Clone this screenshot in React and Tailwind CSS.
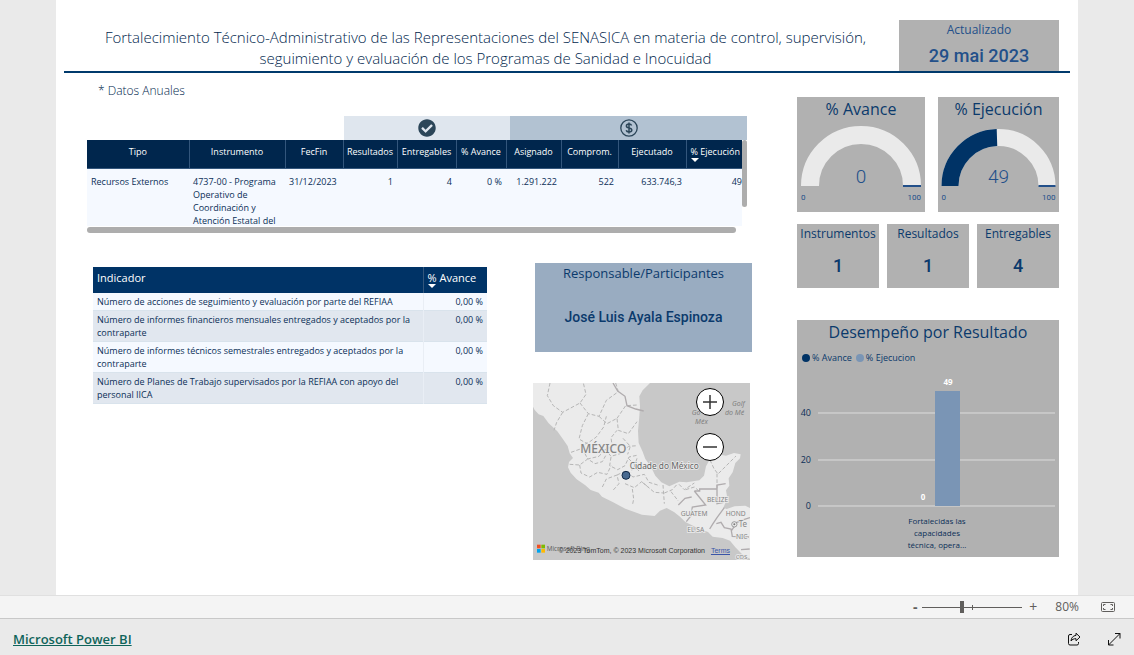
import React from "react";
import { FaCheckCircle } from "react-icons/fa";

const programColumns = [
  { name: "Tipo", width: "w-[102px]", value: "Recursos Externos", align: "text-left" },
  { name: "Instrumento", width: "w-[96px]", value: "4737-00 - Programa Operativo de Coordinación y Atención Estatal del", align: "text-left" },
  { name: "FecFin", width: "w-[58px]", value: "31/12/2023", align: "text-left" },
  { name: "Resultados", width: "w-[54px]", value: "1", align: "text-right" },
  { name: "Entregables", width: "w-[59px]", value: "4", align: "text-right" },
  { name: "% Avance", width: "w-[50px]", value: "0 %", align: "text-right" },
  { name: "Asignado", width: "w-[55px]", value: "1.291.222", align: "text-right" },
  { name: "Comprom.", width: "w-[57px]", value: "522", align: "text-right" },
  { name: "Ejecutado", width: "w-[68px]", value: "633.746,3", align: "text-right" },
  { name: "% Ejecución", width: "w-[56px]", value: "49", align: "text-right", sorted: true },
];

const indicators = [
  "Número de acciones de seguimiento y evaluación por parte del REFIAA",
  "Número de informes financieros mensuales entregados y aceptados por la contraparte",
  "Número de informes técnicos semestrales entregados y aceptados por la contraparte",
  "Número de Planes de Trabajo supervisados por la REFIAA con apoyo del personal IICA",
];

const SortArrow = () => (
  <svg viewBox="0 0 8 4" className="absolute left-1 top-full h-1 w-2" aria-hidden="true">
    <path d="M0 0h8L4 4z" fill="#fff" />
  </svg>
);

const Header = () => (
  <header className="flex items-start border-b-2 border-[#003a6c] pr-[11px]">
    <h1 className="flex-1 pl-2 pt-[27px] text-center text-[15px] leading-[21px] font-light text-[#00264d]">
      Fortalecimiento Técnico-Administrativo de las Representaciones del SENASICA en materia de control, supervisión,
      <br />
      seguimiento y evaluación de los Programas de Sanidad e Inocuidad
    </h1>
    <div className="mt-5 flex h-[51px] w-40 shrink-0 flex-col items-center bg-[#b1b1b1] text-[#23508a]">
      <p className="text-xs leading-5">Actualizado</p>
      <p className="pt-0.5 font-['Roboto'] text-lg leading-7 font-medium">29 mai 2023</p>
    </div>
  </header>
);

const ProgramTable = () => (
  <section className="mr-[5px]">
    <div className="flex h-6 pl-[257px]">
      <div className="flex flex-[166] items-center justify-center bg-[#dfe6ee]">
        <FaCheckCircle className="h-[18px] w-[18px] text-[#2b4558]" />
      </div>
      <div className="flex flex-[236] items-center justify-center bg-[#b2c2d2]">
        <svg viewBox="0 0 18 18" className="h-[18px] w-[18px]" fill="none" stroke="#2b4558">
          <circle cx="9" cy="9" r="8.2" strokeWidth="1.3" />
          <path d="M11.6 6.6C11.2 5.5 10.2 5 9 5c-1.500 0-2.600.700-2.600 1.900 0 2.700 5.400 1.300 5.400 4.100C11.800 12.300 10.600 13 9 13c-1.400 0-2.500-.600-2.800-1.700M9 3.500v11" strokeWidth="1.5" />
        </svg>
      </div>
    </div>
    <div className="flex">
      <div className="h-[86px] flex-1 overflow-hidden bg-[#f5f9ff]">
        <table className="w-full table-fixed border-collapse text-[9px] leading-[13px]">
          <thead>
            <tr className="h-7 border-b border-[#33567c] bg-[#00264d] text-white">
              {programColumns.map((col) => (
                <th
                  key={col.name}
                  scope="col"
                  className={`${col.width} border-r border-[#33567c] p-0 pt-[5px] align-top font-normal whitespace-nowrap last:border-r-0`}
                >
                  <span className={col.sorted ? "relative block pl-1 text-left" : "block"}>
                    {col.name}
                    {col.sorted && <SortArrow />}
                  </span>
                </th>
              ))}
            </tr>
          </thead>
          <tbody>
            <tr className="text-[#0b2f57]">
              {programColumns.map((col) => (
                <td key={col.name} className={`px-1 pt-1.5 align-top last:pr-0 ${col.align}`}>
                  {col.value}
                </td>
              ))}
            </tr>
          </tbody>
        </table>
      </div>
      <div className="h-[67px] w-[5px] rounded-full bg-[#adadad]" />
    </div>
    <div className="mt-px mr-[11px] h-1.5 rounded-full bg-[#adadad]" />
  </section>
);

const IndicatorTable = () => (
  <table className="w-full table-fixed border-collapse text-[9px] leading-[13px] text-[#0b2f57]">
    <thead>
      <tr className="h-[26px] bg-[#003366] text-left text-[11px] text-white">
        <th scope="col" className="border-r border-[#33567c] px-1 pt-1 align-top font-normal">
          Indicador
        </th>
        <th scope="col" className="w-16 p-0 pt-1 align-top font-normal whitespace-nowrap">
          <span className="relative block pl-1">
            % Avance
            <SortArrow />
          </span>
        </th>
      </tr>
    </thead>
    <tbody>
      {indicators.map((name) => (
        <tr key={name} className="border-b border-[#d9e3ec] odd:bg-[#f5f9ff] even:bg-[#e1e7ef]">
          <td className="border-r border-[#e9eef5] px-1 py-0.5">{name}</td>
          <td className="px-1 py-0.5 text-right align-top">0,00 %</td>
        </tr>
      ))}
    </tbody>
  </table>
);

const stateBorders =
  "M75 24l-8 38 18 30 28 20 52-28 18-26-8-34M113 112l-18 30-8 24M165 84l25 32 32 8 22-48 36-26-8-26M190 116l-18 36-10 40 24 14 28-20 22-30 8-32M222 124l24 22 30-16 4 36 30 10 26-36M276 130l26-38 34-2M138 232l34-12 14-18M172 220l16 32 34-8 18-22 22-6-4-28 18-22M240 222l18 22 34-10 18-20 28-2M134 268l30 2 24-18 22 14 22-6 10-18M164 270l4 24 26 12 24-14 28 6 12-26M258 246l-4 26 24 12 22-12 12-26 28-6M232 336l12-24 32-12 6 26-18 20M276 300l26-12 22 18 34-8 14 24 32 10M300 326l28 12 22-18 22 18M322 342l4 30-4 20M352 322l36 30 28 2M414 330l4 56M418 354l24-10 16-18M438 350l22 28M462 328l16 16 30-20M482 344l26-8 14 12M310 250l18 18-10 24M294 190l22 24-8 24M336 250l-8 24 18 18";

const MexicoMap = () => (
  <section className="relative mr-0.5 overflow-hidden bg-[#c8c8c8]">
    <svg viewBox="24 24 651 531" className="block w-full font-['Noto_Sans']" role="img" aria-label="México">
      <path
        d="M24 24v71l5 10 12 13 14 5 16 22 26 24 16 22 15 22 6 22 10 14-12 12-3 16 8 16 18 20 26 18 16 14 24 8 10 12 32 16 38 20 50 18 38 4 16-16 20-8 22 12 18 14 16 16 20 10 20 10 28 10 14 14 30 4 22 8 16 20 22 22 28 16V402l-20-10-32 2-24 8-10-4 12-28-4-24 10-14-2-22 12-18 8-28 14-14 2-12-20-4-24 8-26-4-22 14-12 22-6 28-14 14-38 6-22-2-30 14-24-12-18-20-14-28-16-22-8-22-12-26-2-36 4-44 2-30-2-30 10-18 24-24z"
        fill="#ebebeb"
      />
      <path d={stateBorders} fill="none" stroke="#b6b6b6" strokeWidth="3" strokeDasharray="11 6" />
      <path d="M555 255l12 26 12 16 54-54M576 296v44" fill="none" stroke="#b6b6b6" strokeWidth="3" strokeDasharray="11 6" />
      <path
        d="M264 24l14 24 22 16 6 28 26 10 24 6M460 390l20-20 20-4M508 348l34 42-40 6-4 26-14 18M508 348h16v-6h52v-12l26-4M576 344v42l20-4M598 398l-22 30-12 18-10 16M574 446l14-4 10 16 20 4 4 22M620 466l16-24 20-8 19-6M620 484l52 2M648 524l26-2"
        fill="none"
        stroke="#b0acae"
        strokeWidth="4"
      />
      <g fill="#858585" stroke="#ebebeb" strokeWidth="5" paintOrder="stroke" fontSize="20">
        <text x="166" y="234" fontSize="36" fontWeight="500">MÉXICO</text>
        <text x="314" y="281" fontSize="25" fill="#666">Cidade do México</text>
        <text x="546" y="381">BELIZE</text>
        <text x="467" y="423">GUATEM</text>
        <text x="602" y="423">HOND</text>
        <text x="487" y="471">EL SA</text>
        <text x="641" y="457" fontSize="24">Te</text>
        <text x="633" y="491">NIC</text>
        <text x="632" y="551" fontSize="18">COS</text>
      </g>
      <g fill="#808080" fontSize="21" fontStyle="italic">
        <text x="621" y="92">Golf</text>
        <text x="500" y="119">Go</text>
        <text x="600" y="119">do Mé</text>
        <text x="510" y="146">Méx</text>
      </g>
      <circle cx="628" cy="448" r="8" fill="#ebebeb" stroke="#777" strokeWidth="2" />
      <circle cx="628" cy="448" r="3" fill="#777" />
      <circle cx="303" cy="301" r="12" fill="#48698f" stroke="#142b49" strokeWidth="3" />
      <path d="M36 509h11v11H36z" fill="#f25022" />
      <path d="M49 509h11v11H49z" fill="#7fba00" />
      <path d="M36 522h11v11H36z" fill="#00a4ef" />
      <path d="M49 522h11v11H49z" fill="#ffb900" />
      <text x="65" y="528" fontSize="19" fill="#666">Microsoft Bing</text>
    </svg>
    <div className="absolute top-[5px] right-[26px] flex flex-col gap-[17px]">
      <button type="button" aria-label="Acercar" className="flex h-7 w-7 items-center justify-center rounded-full border border-black bg-white">
        <svg viewBox="0 0 16 16" className="h-4 w-4" stroke="#333" strokeWidth="1.5">
          <path d="M1 8h14M8 1v14" />
        </svg>
      </button>
      <button type="button" aria-label="Alejar" className="flex h-7 w-7 items-center justify-center rounded-full border border-black bg-white">
        <svg viewBox="0 0 16 16" className="h-4 w-4" stroke="#333" strokeWidth="1.5">
          <path d="M1 8h14" />
        </svg>
      </button>
    </div>
    <p className="absolute right-5 bottom-1 font-['Liberation_Sans'] text-[7px] leading-[10px] whitespace-nowrap text-[#333]">
      © 2023 TomTom, © 2023 Microsoft Corporation{" "}
      <a href="#terms" className="ml-1 text-[#3a55a8] underline">
        Terms
      </a>
    </p>
  </section>
);

const Gauge = ({ title, value, radius, thickness, width }) => {
  const cx = width / 2;
  const cy = 65;
  const r = radius - thickness / 2;
  const angle = Math.PI * (1 - value / 100);
  const x = cx + r * Math.cos(angle);
  const y = cy - r * Math.sin(angle);
  return (
    <section className="h-[115px] bg-[#b1b1b1]" style={{ flex: width }}>
      <h2 className="text-center text-base leading-6 text-[#0b3a6c]">{title}</h2>
      <svg viewBox={`0 0 ${width} 88`} className="block w-full font-['Roboto']" role="img" aria-label={`${title}: ${value}`}>
        <path d={`M${cx - r} ${cy}A${r} ${r} 0 0 1 ${cx + r} ${cy}`} fill="none" stroke="#eaeaea" strokeWidth={thickness} />
        {value > 0 && (
          <path d={`M${cx - r} ${cy}A${r} ${r} 0 0 1 ${x} ${y}`} fill="none" stroke="#003366" strokeWidth={thickness} />
        )}
        <path d={`M${cx + radius - thickness} ${cy}h${thickness}`} stroke="#23508a" strokeWidth="2" />
        <text x={cx} y="62" textAnchor="middle" fontSize="19" fontWeight="300" fill="#23508a">
          {value}
        </text>
        <text x={cx - radius} y="79" fontSize="8" fill="#23508a">0</text>
        <text x={cx + radius} y="79" textAnchor="end" fontSize="8" fill="#23508a">100</text>
      </svg>
    </section>
  );
};

const CountCard = ({ title, value }) => (
  <section className="h-16 flex-1 bg-[#b1b1b1] text-center text-[#0b3a6c]">
    <h2 className="text-xs leading-5 whitespace-nowrap">{title}</h2>
    <p className="pt-2 font-['Roboto'] text-lg leading-7 font-medium">{value}</p>
  </section>
);

const ResultChart = () => (
  <section className="h-[237px] bg-[#b1b1b1] text-[#0b3a6c]">
    <h2 className="text-center text-base leading-6">Desempeño por Resultado</h2>
    <ul className="flex gap-1 pt-2 pl-[5px] text-[9px] leading-3">
      <li className="flex items-center gap-0.5">
        <span className="h-2 w-2 rounded-full bg-[#003366]" />% Avance
      </li>
      <li className="flex items-center gap-0.5">
        <span className="h-2 w-2 rounded-full bg-[#7a95b5]" />% Ejecucion
      </li>
    </ul>
    <svg viewBox="0 0 262 193" className="block w-full" fontSize="9" fill="#0b2f57" role="img" aria-label="Desempeño por Resultado">
      <path d="M21 49h237M21 96h237M21 142h237" stroke="#dcdcdc" />
      <path d="M138 27h25v115h-25z" fill="#7a95b5" />
      <g textAnchor="end">
        <text x="14" y="52">40</text>
        <text x="14" y="99">20</text>
        <text x="14" y="145">0</text>
      </g>
      <g textAnchor="middle" fill="#fff" fontSize="8" fontWeight="700">
        <text x="151" y="21">49</text>
        <text x="126" y="136">0</text>
      </g>
      <g textAnchor="middle" fontSize="8">
        <text x="140" y="160">Fortalecidas las</text>
        <text x="140" y="172">capacidades</text>
        <text x="140" y="184">técnica, opera...</text>
      </g>
    </svg>
  </section>
);

const StatusBar = () => (
  <div className="flex h-6 items-center justify-end border-y border-t-[#e0e0e0] border-b-[#c8c8c8] bg-[#f4f4f4] pr-[19px] text-[#605e5c]">
    <button type="button" aria-label="Reducir" className="w-3 text-center text-sm leading-5 font-bold">
      -
    </button>
    <div className="relative mx-px flex items-center">
      <input
        type="range"
        min="0"
        max="100"
        defaultValue="39"
        aria-label="Zoom"
        className="h-px w-[100px] appearance-none bg-[#605e5c] [&::-webkit-slider-thumb]:h-3 [&::-webkit-slider-thumb]:w-1 [&::-webkit-slider-thumb]:appearance-none [&::-webkit-slider-thumb]:bg-[#605e5c]"
      />
      <span className="pointer-events-none absolute left-[50px] h-[5px] w-px bg-[#605e5c]" />
    </div>
    <button type="button" aria-label="Ampliar" className="ml-1 w-3 text-center text-sm leading-5">
      +
    </button>
    <span className="ml-4 text-xs">80%</span>
    <button type="button" aria-label="Ajustar a la página" className="ml-[22px]">
      <svg viewBox="0 0 14 10" className="h-[10px] w-[14px]" fill="none" stroke="#605e5c">
        <rect x=".5" y=".5" width="13" height="9" rx="1" />
        <path d="M2.500 4V2.500H4.500M9.500 2.500h2V4M11.500 6v1.500h-2M4.500 7.500h-2V6" />
      </svg>
    </button>
  </div>
);

const Footer = () => (
  <footer className="flex h-9 items-center justify-between bg-[#eaeaea] px-[13px]">
    <a href="#powerbi" className="mt-1 text-[13px] leading-5 font-semibold text-[#0f645a] underline">
      Microsoft Power BI
    </a>
    <div className="mt-1 flex items-center gap-[26px]">
      <button type="button" aria-label="Compartir">
        <svg viewBox="0 0 14 14" className="h-[14px] w-[14px]" fill="none" stroke="#111" strokeLinejoin="round">
          <path d="M5 2.500H3A1.500 1.500 0 0 0 1.500 4v7.500A1.500 1.500 0 0 0 3 13h7a1.500 1.500 0 0 0 1.500-1.500V10" />
          <path d="M9 1.200l4 3.800-4 3.800V6.700C6.500 6.600 5.200 7.500 4 9c.2-3 2-5.400 5-5.600z" />
        </svg>
      </button>
      <button type="button" aria-label="Pantalla completa">
        <svg viewBox="0 0 14 14" className="h-[14px] w-[14px]" fill="none" stroke="#111">
          <path d="M8 1.500h5V6.500M13 1.500L1.500 13M1.500 8v5h5" />
        </svg>
      </button>
    </div>
  </footer>
);

const App = () => (
  <div className="flex min-h-screen flex-col bg-[#eaeaea] font-['Open_Sans',sans-serif]">
    <main className="mx-14 flex-1 bg-white px-2 pb-8">
      <Header />
      <div className="flex gap-[45px] pr-[11px] pl-[23px]">
        <div className="min-w-0 flex-1">
          <p className="pt-2 pb-[15px] pl-[11px] text-xs leading-5 font-light text-[#00264d]">* Datos Anuales</p>
          <ProgramTable />
          <div className="flex gap-[46px] pt-[30px] pl-1.5">
            <div className="min-w-0 flex-[394] pt-1">
              <IndicatorTable />
            </div>
            <div className="flex min-w-0 flex-[219] flex-col gap-[31px]">
              <section className="ml-0.5 h-[89px] bg-[#99acc1] text-center text-[#0b3a6c]">
                <h2 className="text-[13px] leading-5">Responsable/Participantes</h2>
                <p className="pt-6 font-['Roboto'] text-sm leading-5 font-medium">José Luis Ayala Espinoza</p>
              </section>
              <MexicoMap />
            </div>
          </div>
        </div>
        <aside className="w-[262px] shrink-0 pt-6">
          <div className="flex gap-[13px]">
            <Gauge title="% Avance" value={0} radius={60} thickness={18} width={128} />
            <Gauge title="% Ejecución" value={49} radius={57} thickness={17} width={121} />
          </div>
          <div className="flex gap-2 pt-3">
            <CountCard title="Instrumentos" value="1" />
            <CountCard title="Resultados" value="1" />
            <CountCard title="Entregables" value="4" />
          </div>
          <div className="pt-8">
            <ResultChart />
          </div>
        </aside>
      </div>
    </main>
    <StatusBar />
    <Footer />
  </div>
);

export default App;
